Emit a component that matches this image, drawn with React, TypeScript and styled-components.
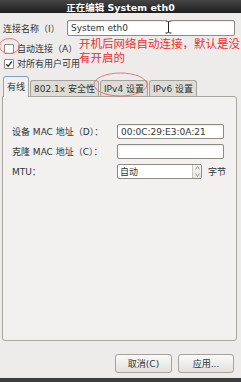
import React from 'react';
import styled, { createGlobalStyle } from 'styled-components';

const GlobalStyle = createGlobalStyle`
  html, body {
    margin: 0;
    padding: 0;
    background: #edeceb;
  }
  body {
    font-family: "DejaVu Sans", "Noto Sans CJK SC", sans-serif;
    font-size: 9px;
    color: #2e3436;
  }
`;

const Window = styled.div`
  position: relative;
  width: 241px;
  height: 382px;
  overflow: hidden;
  display: flex;
  flex-direction: column;
  background: #edeceb;
`;

const TitleBar = styled.div`
  height: 13px;
  flex-shrink: 0;
  display: flex;
  align-items: center;
  justify-content: center;
  background: linear-gradient(#454545, #1e1e1e);
  color: #ffffff;
  font-weight: bold;
  font-size: 9.5px;
`;

const NameRow = styled.div`
  display: flex;
  align-items: center;
  height: 16px;
  margin-top: 7px;
  padding-left: 3px;
`;

const NameLabel = styled.span`
  width: 64px;
  white-space: nowrap;
`;

const TextInput = styled.div<{ $width: number; $height?: number }>`
  box-sizing: border-box;
  width: ${p => p.$width}px;
  height: ${p => p.$height ?? 15}px;
  display: flex;
  align-items: center;
  padding-left: 3px;
  background: #ffffff;
  border: 1px solid #8e8b85;
  border-radius: 2px;
  box-shadow: inset 0 1px 1px rgba(0, 0, 0, 0.08);
  color: #2e3436;
  white-space: nowrap;
`;

const CheckRow = styled.div<{ $gap: number }>`
  display: flex;
  align-items: center;
  gap: 3px;
  height: 13px;
  margin-top: ${p => p.$gap}px;
  padding-left: 4px;
`;

const Box = styled.span`
  box-sizing: border-box;
  width: 10px;
  height: 10px;
  display: flex;
  align-items: center;
  justify-content: center;
  background: #ffffff;
  border: 1px solid #8e8b85;
  border-radius: 1px;
`;

const Notebook = styled.div`
  margin: 6px 4px 0 2px;
  display: flex;
  flex-direction: column;
`;

const TabStrip = styled.div`
  display: flex;
  align-items: flex-end;
  padding-left: 1px;
  height: 20px;
  position: relative;
  z-index: 1;
`;

const Tab = styled.div<{ $active?: boolean }>`
  box-sizing: border-box;
  height: ${p => (p.$active ? 21 : 16)}px;
  margin-bottom: ${p => (p.$active ? -1 : 0)}px;
  padding: 0 3px ${p => (p.$active ? 2 : 0)}px;
  margin-right: 1px;
  display: flex;
  align-items: center;
  white-space: nowrap;
  border: 1px solid #a6a39d;
  border-bottom: none;
  border-top-color: ${p => (p.$active ? '#7f9ec2' : '#a6a39d')};
  border-radius: 3px 3px 0 0;
  background: ${p => (p.$active ? '#f2f1f0' : '#dedcd7')};
`;

const Panel = styled.div`
  box-sizing: border-box;
  height: 245px;
  background: #f2f1f0;
  border: 1px solid #aaa7a1;
  border-radius: 0 3px 3px 3px;
  padding: 27px 0 0 9px;
  display: grid;
  grid-template-columns: 105px auto;
  grid-auto-rows: 15px;
  row-gap: 5px;
  align-items: center;
  align-content: start;
`;

const FieldLabel = styled.span`
  white-space: nowrap;
`;

const SpinRow = styled.div`
  display: flex;
  align-items: center;
  gap: 6px;
`;

const Spin = styled.div`
  box-sizing: border-box;
  width: 85px;
  height: 15px;
  display: flex;
  background: #ffffff;
  border: 1px solid #8e8b85;
  border-radius: 2px;
`;

const SpinText = styled.span`
  flex: 1;
  padding-left: 2px;
  display: flex;
  align-items: center;
`;

const SpinButtons = styled.div`
  width: 8px;
  display: flex;
  flex-direction: column;
  border-left: 1px solid #c9c6c0;
  background: linear-gradient(#f8f8f7, #e6e5e2);
`;

const SpinHalf = styled.span`
  flex: 1;
  display: flex;
  align-items: center;
  justify-content: center;
`;

const ButtonRow = styled.div`
  margin-top: 13px;
  display: flex;
  justify-content: flex-end;
  gap: 6px;
  padding-right: 7px;
`;

const Button = styled.div<{ $width: number }>`
  box-sizing: border-box;
  width: ${p => p.$width}px;
  height: 19px;
  display: flex;
  align-items: center;
  justify-content: center;
  background: linear-gradient(#fafaf9, #e3e1dd);
  border: 1px solid #a6a39d;
  border-radius: 3px;
  color: #2e3436;
`;

const BottomEdge = styled.div`
  margin-top: auto;
  height: 4px;
  background: #3d3d3d;
`;

const Overlay = styled.svg`
  position: absolute;
  left: 0;
  top: 0;
  z-index: 2;
  pointer-events: none;
`;

const Note = styled.div`
  position: absolute;
  left: 79px;
  top: 36px;
  z-index: 2;
  color: #ee3030;
  font-family: "Noto Sans CJK SC", sans-serif;
  font-size: 11.5px;
  line-height: 14px;
  white-space: nowrap;
`;

const Arrow = ({ up }: { up?: boolean }) => (
  <svg width="5" height="4" viewBox="0 0 5 4">
    <path d={up ? 'M0.5 3.5 L2.5 0.5 L4.5 3.5' : 'M0.5 0.5 L2.5 3.5 L4.5 0.5'} fill="none" stroke="#8a8883" strokeWidth="0.8" />
  </svg>
);

const App: React.FC = () => {
  return (
    <>
      <GlobalStyle />
      <Window>
        <TitleBar>正在编辑 System eth0</TitleBar>

        <NameRow>
          <NameLabel>连接名称（I）</NameLabel>
          <TextInput $width={168} $height={16}>System eth0</TextInput>
        </NameRow>

        <CheckRow $gap={6}>
          <Box />
          <span>自动连接（A）</span>
        </CheckRow>
        <CheckRow $gap={2}>
          <Box>
            <svg width="8" height="8" viewBox="0 0 8 8">
              <path d="M1.2 4.2 L3.2 6.3 L6.8 1.5" fill="none" stroke="#2e3436" strokeWidth="1.3" />
            </svg>
          </Box>
          <span>对所有用户可用</span>
        </CheckRow>

        <Notebook>
          <TabStrip>
            <Tab $active>有线</Tab>
            <Tab>802.1x 安全性</Tab>
            <Tab>IPv4 设置</Tab>
            <Tab>IPv6 设置</Tab>
          </TabStrip>
          <Panel>
            <FieldLabel>设备 MAC 地址（D）：</FieldLabel>
            <TextInput $width={107}>00:0C:29:E3:0A:21</TextInput>
            <FieldLabel>克隆 MAC 地址（C）：</FieldLabel>
            <TextInput $width={107} />
            <FieldLabel>MTU：</FieldLabel>
            <SpinRow>
              <Spin>
                <SpinText>自动</SpinText>
                <SpinButtons>
                  <SpinHalf><Arrow up /></SpinHalf>
                  <SpinHalf><Arrow /></SpinHalf>
                </SpinButtons>
              </Spin>
              <span>字节</span>
            </SpinRow>
          </Panel>
        </Notebook>

        <ButtonRow>
          <Button $width={57}>取消(C)</Button>
          <Button $width={56}>应用...</Button>
        </ButtonRow>

        <BottomEdge />

        <Overlay width="241" height="382" viewBox="0 0 241 382">
          <ellipse cx="9.5" cy="46" rx="10" ry="7.5" fill="none" stroke="#e86a6a" strokeWidth="0.9" />
          <ellipse cx="120.5" cy="84.5" rx="26.5" ry="11.5" fill="none" stroke="#e86a6a" strokeWidth="0.9" />
          <path d="M165.5 21 H167.5 L168.5 22 L169.5 21 H171.5 M168.5 22 V32 M165.5 33 H167.5 L168.5 32 L169.5 33 H171.5" fill="none" stroke="#ffffff" strokeWidth="2.2" />
          <path d="M165.5 21 H167.5 L168.5 22 L169.5 21 H171.5 M168.5 22 V32 M165.5 33 H167.5 L168.5 32 L169.5 33 H171.5" fill="none" stroke="#222222" strokeWidth="1" />
        </Overlay>
        <Note>
          开机后网络自动连接，默认是没
          <br />
          有开启的
        </Note>
      </Window>
    </>
  );
};

export default App;
